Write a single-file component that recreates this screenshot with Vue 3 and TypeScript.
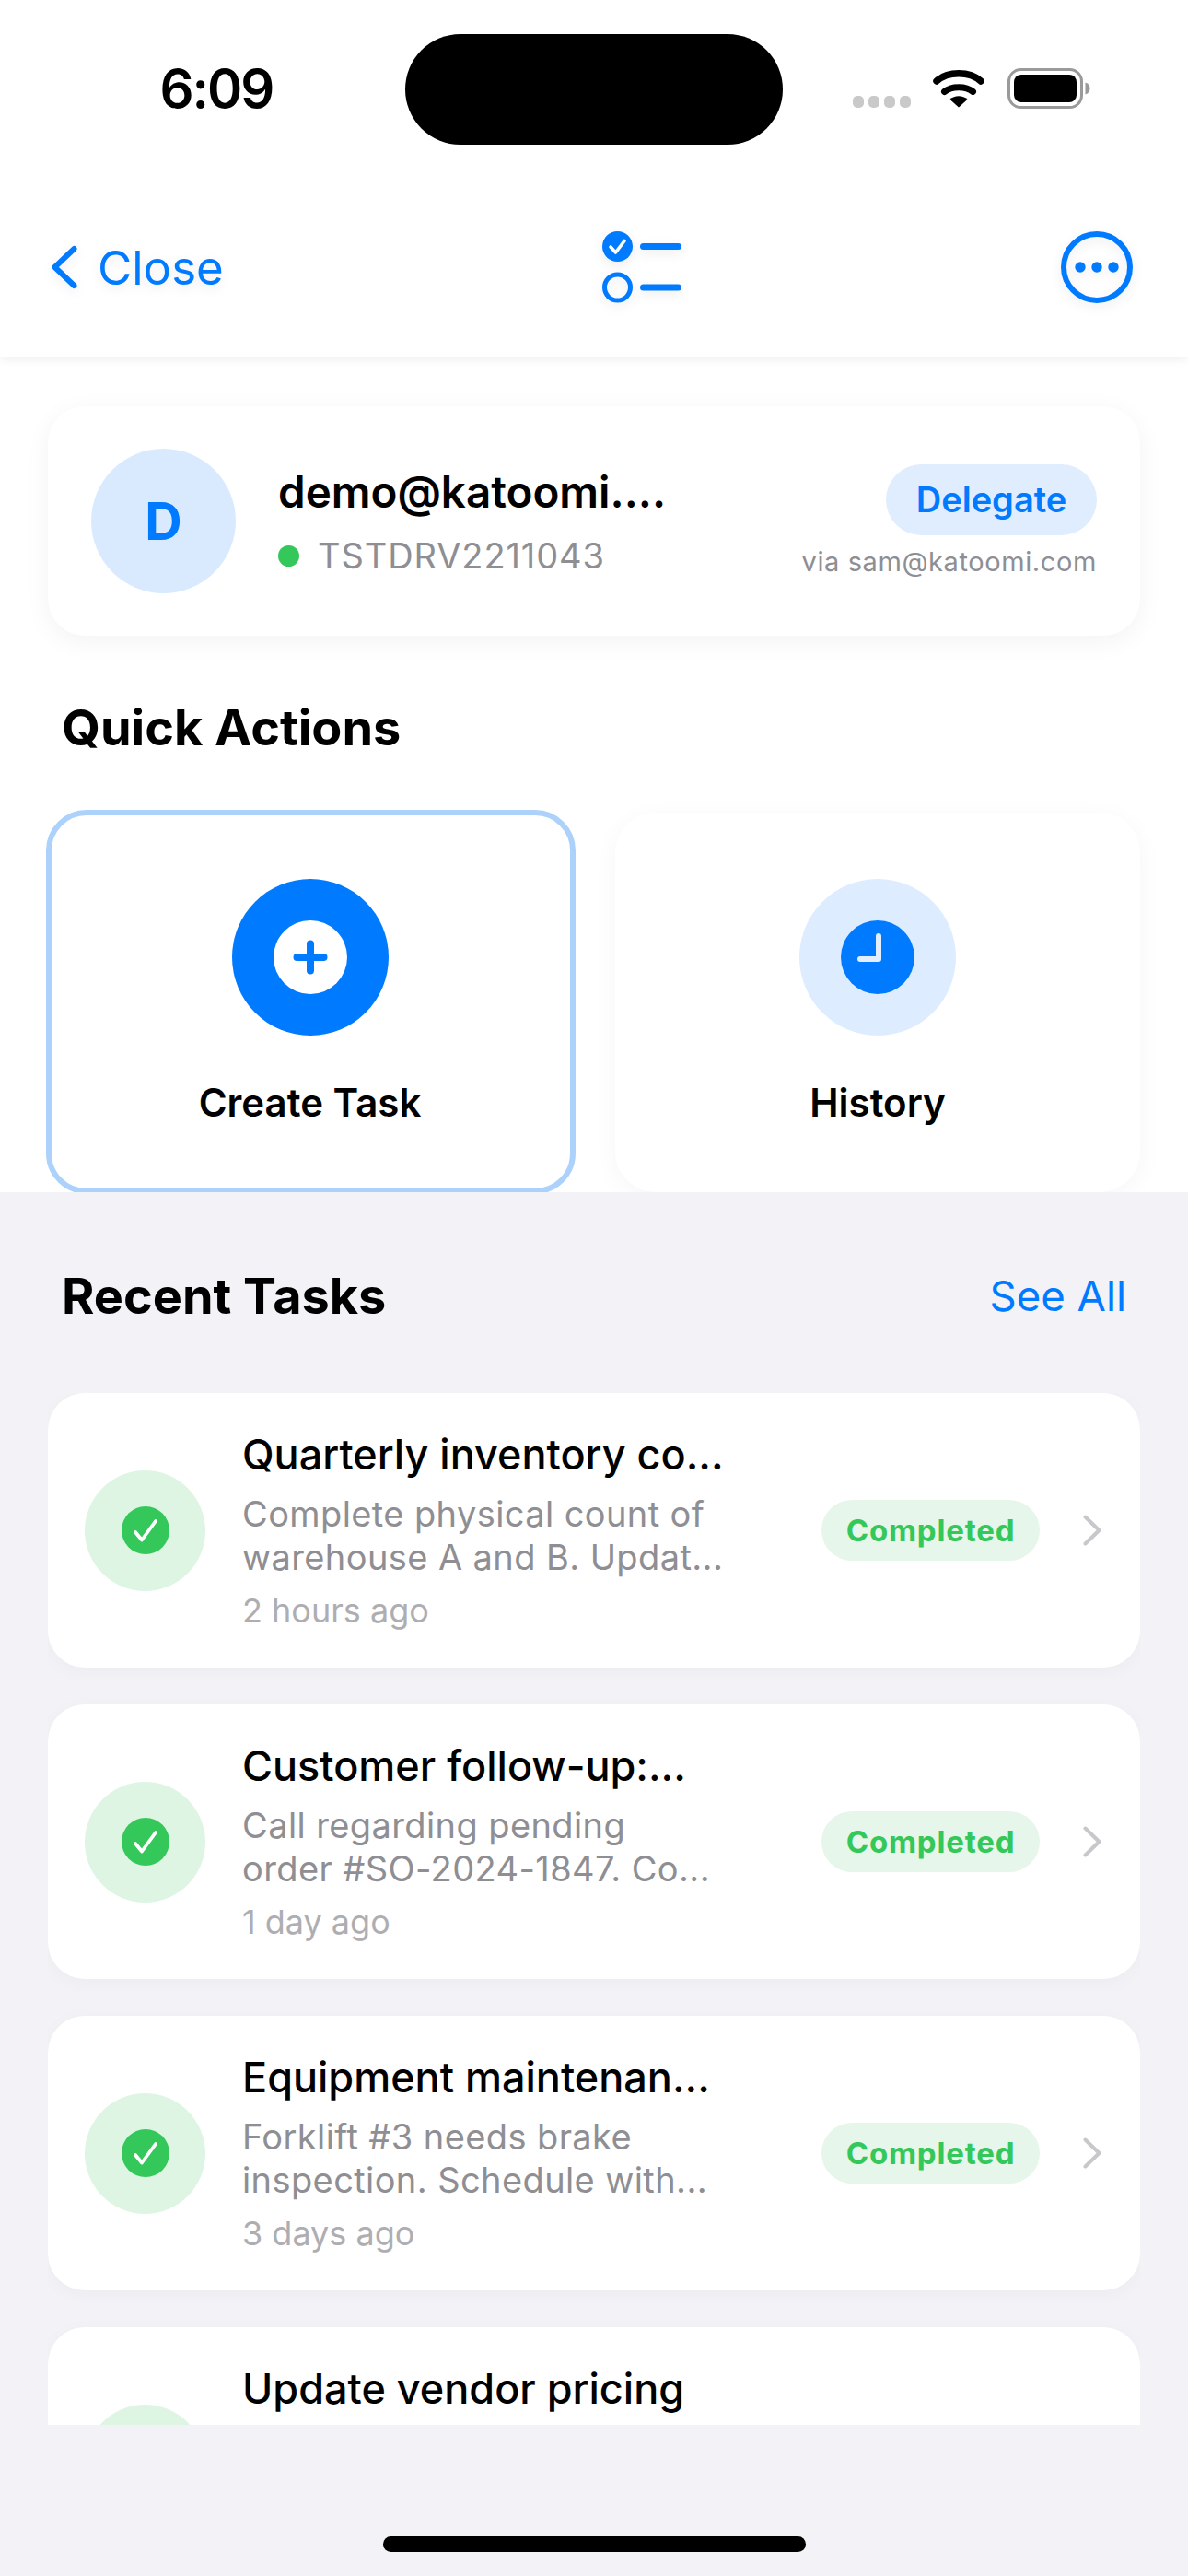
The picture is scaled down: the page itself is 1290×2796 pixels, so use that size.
<script setup lang="ts">
interface Task {
  title: string
  lines: string[]
  time: string
}

const tasks: Task[] = [
  { title: 'Quarterly inventory co...', lines: ['Complete physical count of', 'warehouse A and B. Updat...'], time: '2 hours ago' },
  { title: 'Customer follow-up:...', lines: ['Call regarding pending', 'order #SO-2024-1847. Co...'], time: '1 day ago' },
  { title: 'Equipment maintenan...', lines: ['Forklift #3 needs brake', 'inspection. Schedule with...'], time: '3 days ago' },
  { title: 'Update vendor pricing', lines: [], time: '' },
]
</script>

<template>
  <div class="screen">
    <div class="top">
      <div class="status">
        <span class="time">6:09</span>
        <div class="island"></div>
        <div class="status-right">
          <div class="signal"><i></i><i></i><i></i><i></i></div>
          <svg class="wifi" width="56" height="42" viewBox="0 0 56 42">
            <path d="M4 13C16 2 40 2 52 13" fill="none" stroke="#000" stroke-width="7.5" stroke-linecap="round" />
            <path d="M12.5 24.5C20 18 36 18 43.5 24.5" fill="none" stroke="#000" stroke-width="7" stroke-linecap="round" />
            <path d="M28 41.5L18.5 33C23 28 33 28 37.5 33Z" fill="#000" />
          </svg>
          <svg class="battery" width="90" height="44" viewBox="0 0 90 44">
            <rect x="1.5" y="1.5" width="79" height="41" rx="13" fill="none" stroke="#9a9a9a" stroke-width="3" />
            <rect x="7" y="7" width="68" height="30" rx="8" fill="#000" />
            <path d="M84.5 15.5C88 16.5 89.5 19 89.5 22C89.5 25 88 27.5 84.5 28.5Z" fill="#9a9a9a" />
          </svg>
        </div>
      </div>
      <div class="nav">
        <div class="close">
          <svg width="28" height="48" viewBox="0 0 28 48">
            <path d="M24.5 4L3.5 24L24.5 44" fill="none" stroke="#007aff" stroke-width="6" stroke-linecap="round" stroke-linejoin="round" />
          </svg>
          <span>Close</span>
        </div>
        <svg class="list-icon" width="87" height="78" viewBox="0 0 87 78">
          <circle cx="16.5" cy="16.5" r="16.5" fill="#007aff" />
          <path d="M9 17L14.5 23L24 10.5" fill="none" stroke="#fff" stroke-width="3.6" stroke-linecap="round" stroke-linejoin="round" />
          <circle cx="16.5" cy="61" r="14" fill="none" stroke="#007aff" stroke-width="5" />
          <rect x="41" y="13" width="45" height="7" rx="3.5" fill="#007aff" />
          <rect x="41" y="57.5" width="45" height="7" rx="3.5" fill="#007aff" />
        </svg>
        <svg class="more" width="78" height="78" viewBox="0 0 78 78">
          <circle cx="39" cy="39" r="36" fill="none" stroke="#007aff" stroke-width="6" />
          <circle cx="21" cy="39" r="5.7" fill="#007aff" />
          <circle cx="39" cy="39" r="5.7" fill="#007aff" />
          <circle cx="57" cy="39" r="5.7" fill="#007aff" />
        </svg>
      </div>
    </div>

    <div class="upper">
      <div class="account">
        <div class="avatar">D</div>
        <div class="account-info">
          <div class="email">demo@katoomi....</div>
          <div class="acct-id"><i class="dot"></i>TSTDRV2211043</div>
        </div>
        <div class="account-side">
          <div class="delegate">Delegate</div>
          <div class="via">via sam@katoomi.com</div>
        </div>
      </div>

      <h2 class="heading qa">Quick Actions</h2>

      <div class="actions">
        <div class="action action-on">
          <div class="action-circle solid">
            <div class="plus-disc">
              <svg width="40" height="40" viewBox="0 0 40 40">
                <path d="M20 5.5V34.5M5.5 20H34.5" fill="none" stroke="#007aff" stroke-width="8" stroke-linecap="round" />
              </svg>
            </div>
          </div>
          <div class="action-label">Create Task</div>
        </div>
        <div class="action">
          <div class="action-circle pale">
            <svg width="80" height="80" viewBox="0 0 80 80">
              <circle cx="40" cy="40" r="40" fill="#007aff" />
              <path d="M41 17V42H21" fill="none" stroke="#e3efff" stroke-width="6" stroke-linecap="round" stroke-linejoin="round" />
            </svg>
          </div>
          <div class="action-label">History</div>
        </div>
      </div>
    </div>

    <div class="lower">
      <div class="recent-head">
        <h2 class="heading">Recent Tasks</h2>
        <span class="see-all">See All</span>
      </div>
      <div class="list-clip">
        <div class="task" v-for="t in tasks" :key="t.title">
          <div class="task-icon">
            <svg width="52" height="52" viewBox="0 0 52 52">
              <circle cx="26" cy="26" r="26" fill="#34c759" />
              <path d="M15 28L22 36.5L37 16" fill="none" stroke="#fff" stroke-width="3.8" stroke-linecap="round" stroke-linejoin="round" />
            </svg>
          </div>
          <div class="task-body">
            <div class="task-title">{{ t.title }}</div>
            <div class="task-desc"><div v-for="l in t.lines" :key="l">{{ l }}</div></div>
            <div class="task-time">{{ t.time }}</div>
          </div>
          <template v-if="t.time">
            <div class="badge">Completed</div>
            <svg class="chev" width="20" height="34" viewBox="0 0 20 34">
              <path d="M2.5 2.5L17.5 17L2.5 31.5" fill="none" stroke="#c7c7cc" stroke-width="4" stroke-linecap="round" stroke-linejoin="round" />
            </svg>
          </template>
        </div>
      </div>
      <div class="home-area"><div class="home-bar"></div></div>
    </div>
  </div>
</template>

<style>
html, body { margin: 0; background: #f2f2f7; }
</style>

<style scoped>
* { box-sizing: border-box; }
.screen {
  width: 1290px;
  height: 2796px;
  overflow: hidden;
  display: flex;
  flex-direction: column;
  background: #f2f2f7;
  font-family: Inter, "Liberation Sans", sans-serif;
  color: #000;
}
.top {
  height: 388px;
  flex: none;
  background: #fff;
  box-shadow: 0 2px 10px rgba(0, 0, 0, 0.07);
  position: relative;
  z-index: 1;
  display: flex;
  flex-direction: column;
}
.status {
  height: 192px;
  flex: none;
  position: relative;
}
.time {
  position: absolute;
  left: 0;
  top: 66px;
  width: 470px;
  text-align: center;
  font-size: 58px;
  line-height: 60px;
  font-weight: 600;
  letter-spacing: -2px;
}
.island {
  position: absolute;
  left: 440px;
  top: 37px;
  width: 410px;
  height: 120px;
  border-radius: 60px;
  background: #000;
}
.status-right {
  position: absolute;
  left: 926px;
  top: 74px;
  display: flex;
  align-items: flex-end;
  gap: 24px;
}
.signal { display: flex; gap: 5px; padding-bottom: 1px; }
.signal i { width: 12px; height: 13px; border-radius: 5px; background: #c9c9c9; display: block; }
.wifi { margin-bottom: 1px; margin-right: 1px; }
.nav {
  flex: 1;
  display: flex;
  align-items: center;
  justify-content: space-between;
  padding: 0 60px 0 56px;
  filter: drop-shadow(0 4px 6px rgba(0, 0, 0, 0.08));
}
.close {
  display: flex;
  align-items: center;
  gap: 22px;
  color: #007aff;
  font-size: 51px;
  line-height: 60px;
}
.close span { padding-top: 2px; }
.upper {
  height: 907px;
  flex: none;
  margin-top: -1px;
  background: #fff;
  padding: 54px 52px 0;
  overflow: hidden;
}
.account {
  height: 249px;
  border-radius: 40px;
  background: #fff;
  box-shadow: 0 6px 28px rgba(0, 0, 0, 0.05);
  display: flex;
  align-items: flex-start;
  padding: 46px 47px 0;
}
.avatar {
  width: 157px;
  height: 157px;
  border-radius: 50%;
  background: #d9eaff;
  color: #007aff;
  font-size: 56px;
  font-weight: 700;
  display: flex;
  align-items: center;
  justify-content: center;
  flex: none;
}
.account-info { margin-left: 46px; flex: 1; padding-top: 17px; }
.email { font-size: 47.5px; font-weight: 600; line-height: 60px; }
.acct-id {
  display: flex;
  align-items: center;
  margin-top: 16px;
  color: #8e8e93;
  font-size: 38px;
  line-height: 46px;
  letter-spacing: 0.9px;
}
.dot {
  width: 23px;
  height: 23px;
  border-radius: 50%;
  background: #34c759;
  margin-right: 20px;
}
.account-side { display: flex; flex-direction: column; align-items: flex-end; padding-top: 17px; }
.delegate {
  width: 229px;
  height: 77px;
  border-radius: 39px;
  background: #dfedff;
  color: #007aff;
  font-size: 38px;
  font-weight: 600;
  padding-bottom: 2px;
  display: flex;
  align-items: center;
  justify-content: center;
}
.via {
  margin-top: 11px;
  color: #8e8e93;
  font-size: 29px;
  line-height: 36px;
  letter-spacing: 0.6px;
}
.heading { margin: 0; font-size: 54px; font-weight: 700; line-height: 64px; }
.qa { margin: 68px 0 0 15px; }
.actions { display: grid; grid-template-columns: 570px 570px; gap: 46px; margin-top: 60px; }
.action {
  height: 412px;
  border-radius: 44px;
  background: #fff;
  box-shadow: 0 6px 28px rgba(0, 0, 0, 0.04);
  display: flex;
  flex-direction: column;
  align-items: center;
  padding-top: 72px;
}
.action-on {
  height: 417px;
  margin: -3px -3px 0 -2px;
  border: 6px solid #acd2fb;
  padding: 69px 2px 0 0;
  box-shadow: none;
}
.action-circle {
  width: 170px;
  height: 170px;
  border-radius: 50%;
  display: flex;
  align-items: center;
  justify-content: center;
  flex: none;
}
.solid { background: #007aff; }
.pale { background: #deecff; }
.plus-disc {
  width: 80px;
  height: 80px;
  border-radius: 50%;
  background: #fff;
  display: flex;
  align-items: center;
  justify-content: center;
}
.action-label { margin-top: 47px; font-size: 42px; font-weight: 600; line-height: 52px; }
.lower {
  flex: 1;
  min-height: 0;
  padding: 0 52px;
  display: flex;
  flex-direction: column;
  background: #f2f2f7;
}
.recent-head {
  display: flex;
  justify-content: space-between;
  align-items: center;
  height: 64px;
  flex: none;
  margin-top: 81px;
  padding: 0 15px;
}
.see-all { color: #007aff; font-size: 45.5px; padding-bottom: 2px; }
.list-clip {
  margin-top: 73px;
  height: 1120px;
  overflow: hidden;
  flex: none;
  display: flex;
  flex-direction: column;
  gap: 40px;
}
.task {
  flex: none;
  height: 298px;
  border-radius: 40px;
  background: #fff;
  display: flex;
  align-items: center;
  padding: 0 42px 0 40px;
  box-shadow: 0 4px 20px rgba(0, 0, 0, 0.03);
}
.task-icon {
  width: 131px;
  height: 131px;
  border-radius: 50%;
  background: #dff5e4;
  display: flex;
  align-items: center;
  justify-content: center;
  flex: none;
}
.task-body { margin-left: 40px; flex: 1; min-width: 0; padding-bottom: 2px; }
.task-title { font-size: 45px; font-weight: 500; line-height: 56px; white-space: nowrap; }
.task-desc {
  margin-top: 13px;
  min-height: 94px;
  color: #8e8e93;
  font-size: 38px;
  line-height: 47px;
  letter-spacing: 0.4px;
  white-space: nowrap;
}
.task-time { margin-top: 12px; min-height: 44px; color: #aeaeb2; font-size: 36px; line-height: 44px; }
.badge {
  width: 237px;
  height: 66px;
  border-radius: 33px;
  background: #e6f6ea;
  color: #34c759;
  font-size: 33px;
  font-weight: 700;
  letter-spacing: 0.8px;
  display: flex;
  align-items: center;
  justify-content: center;
  flex: none;
}
.chev { margin-left: 47px; flex: none; }
.home-area {
  flex: 1;
  display: flex;
  justify-content: center;
  align-items: flex-end;
  padding-bottom: 26px;
}
.home-bar { width: 459px; height: 17px; border-radius: 9px; background: #000; }
</style>
